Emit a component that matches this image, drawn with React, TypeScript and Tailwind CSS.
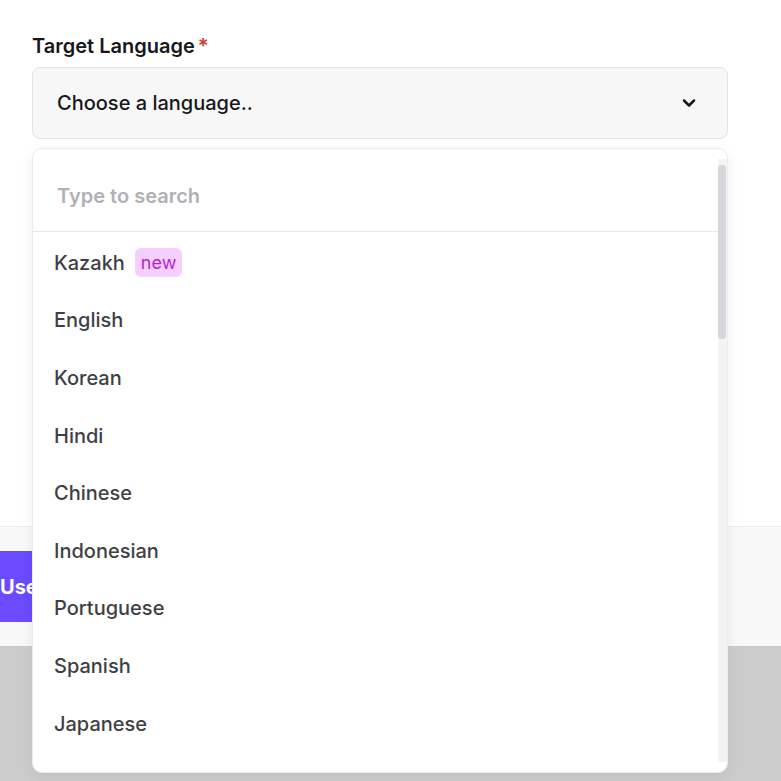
import { ChevronDown } from "lucide-react"

const LANGUAGES = ["Kazakh", "English", "Korean", "Hindi", "Chinese", "Indonesian", "Portuguese", "Spanish", "Japanese"]

export default function App() {
  return (
    <div
      className="relative flex h-[781px] w-full flex-col overflow-hidden bg-white"
      style={{ fontFamily: "Inter, 'Noto Sans', sans-serif" }}
    >
      <div className="h-[526px] px-[32px] pt-[32px]">
        <label className="flex items-center gap-[3px] text-[20px] font-semibold leading-[28px] text-[#18181b]">
          Target Language
          <span className="text-[#d03a2e]">*</span>
        </label>
        <button
          type="button"
          className="mt-[7px] flex h-[72px] w-[696px] items-center justify-between rounded-lg border border-[#e4e4e7] bg-[#f7f7f8] pl-[24px] pr-[28px] text-left"
        >
          <span className="text-[20px] font-medium text-[#18181b]">Choose a language..</span>
          <ChevronDown size={20} strokeWidth={3} className="text-[#18181b]" />
        </button>
      </div>

      <div className="flex h-[120px] items-start border-t border-[#ededed] bg-[#f8f8f8] pt-[24px]">
        <button
          type="button"
          className="-ml-[70px] h-[71px] rounded-lg bg-[#6a4bff] px-[70px] text-[20px] font-bold text-white"
        >
          Use
        </button>
      </div>
      <div className="flex-1 bg-[#cccccc]" />

      <span className="absolute left-[325px] top-[522px] h-[6px] w-[6px] rounded-full bg-[#d12a2a]" />

      <div className="absolute left-[32px] top-[148px] flex h-[625px] w-[696px] overflow-hidden rounded-[10px] border border-[#ececee] bg-white shadow-[0_4px_14px_rgba(0,0,0,0.06)]">
        <div className="flex-1">
          <div className="border-b border-[#e8e8ea] pb-[21px] pl-[24px] pt-[33px]">
            <input
              placeholder="Type to search"
              className="w-full bg-transparent text-[20px] font-semibold leading-[28px] text-[#18181b] outline-none placeholder:text-[#b0b0b6]"
            />
          </div>
          <ul className="pt-[2px]">
            {LANGUAGES.map((lang) => (
              <li key={lang} className="flex h-[57.6px] items-center pl-[21px] text-[20px] font-medium text-[#3f3f46]">
                {lang}
                {lang === "Kazakh" && (
                  <span className="ml-[10px] flex h-[29px] items-center rounded-md bg-[#f5d0fe] px-[6px] text-[18px] font-normal text-[#b624d0]">
                    new
                  </span>
                )}
              </li>
            ))}
          </ul>
        </div>
        <div className="mt-[10px] mb-[10px] w-[9px] bg-[#f3f3f4]">
          <div className="mt-[6px] h-[174px] w-[8px] rounded-full bg-[#d6d6da]" />
        </div>
      </div>
    </div>
  )
}
